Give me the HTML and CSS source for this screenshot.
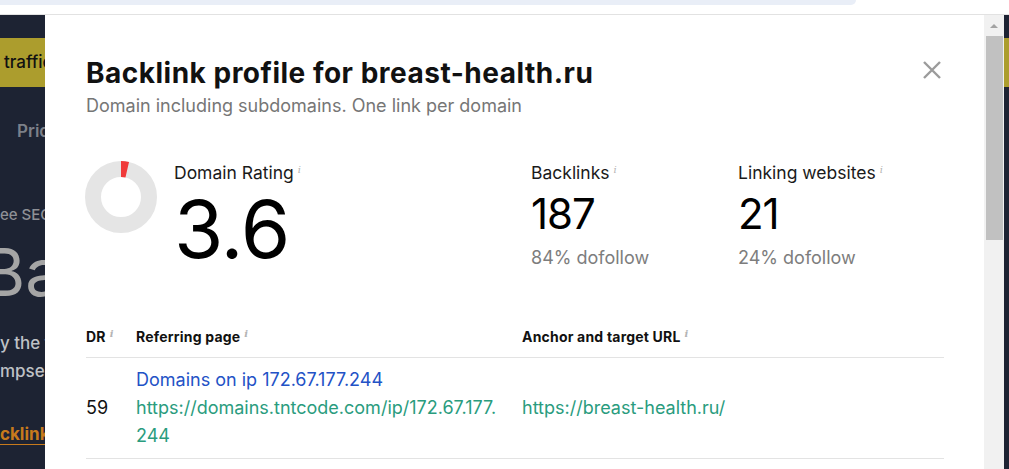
FILE: index.html
```html
<!DOCTYPE html>
<html lang="en">
<head>
    <meta charset="UTF-8">
    <meta name="viewport" content="width=device-width, initial-scale=1.0">
    <title>Backlink profile for breast-health.ru</title>
    <link rel="stylesheet" href="styles.css">
</head>
<body>
    <div class="chrome"><div class="chrome-tab"></div></div>
    <div class="stage">
        <div class="page-left">
            <div class="cta">traffic</div>
            <div class="nav-item">Pricing</div>
            <div class="eyebrow">ee SEO</div>
            <div class="hero">Ba</div>
            <div class="lead lead-first">y the f</div>
            <div class="lead">mpse</div>
            <div class="more">cklinks</div>
        </div>

        <div class="modal">
            <div class="modal-head">
                <div>
                    <h1 class="modal-title">Backlink profile for breast-health.ru</h1>
                    <p class="modal-subtitle">Domain including subdomains. One link per domain</p>
                </div>
                <button class="close-btn" aria-label="Close">
                    <svg width="22" height="22" viewBox="0 0 22 22">
                        <path d="M3 3 L19 19 M19 3 L3 19" stroke="#9b9b9b" stroke-width="2.4" fill="none"/>
                    </svg>
                </button>
            </div>

            <div class="metrics">
                <div class="metric metric-dr">
                    <svg class="donut" width="72" height="72" viewBox="0 0 72 72">
                        <circle cx="36" cy="36" r="28" fill="none" stroke="#e5e5e5" stroke-width="16"/>
                        <circle cx="36" cy="36" r="28" fill="none" stroke="#f03a3a" stroke-width="16"
                                stroke-dasharray="6.3 175.9" transform="rotate(-90 36 36)"/>
                    </svg>
                    <div>
                        <div class="metric-label">Domain Rating<span class="info">i</span></div>
                        <div class="dr-value">3.6</div>
                    </div>
                </div>
                <div class="metric">
                    <div class="metric-label">Backlinks<span class="info">i</span></div>
                    <div class="metric-value">187</div>
                    <div class="metric-sub">84% dofollow</div>
                </div>
                <div class="metric">
                    <div class="metric-label">Linking websites<span class="info">i</span></div>
                    <div class="metric-value">21</div>
                    <div class="metric-sub">24% dofollow</div>
                </div>
            </div>

            <table class="links">
                <thead>
                    <tr>
                        <th class="col-dr">DR<span class="info">i</span></th>
                        <th class="col-page">Referring page<span class="info">i</span></th>
                        <th>Anchor and target URL<span class="info">i</span></th>
                    </tr>
                </thead>
                <tbody>
                    <tr>
                        <td>59</td>
                        <td>
                            <a class="page-title" href="#">Domains on ip 172.67.177.244</a>
                            <a class="url" href="#">https://domains.tntcode.com/ip/172.67.177.<br>244</a>
                        </td>
                        <td><a class="url" href="#">https://breast-health.ru/</a></td>
                    </tr>
                </tbody>
            </table>
        </div>

        <div class="scrollbar">
            <div class="scroll-arrow"></div>
            <div class="scroll-thumb"></div>
        </div>
        <div class="page-right"><div class="cta-edge"></div></div>
    </div>
</body>
</html>
```

FILE: styles.css
```css
body {
    margin: 0;
    width: 1009px;
    height: 469px;
    overflow: hidden;
    font-family: Inter, "Noto Sans", sans-serif;
    color: #111;
    background: #fff;
}
.chrome {
    height: 14px;
    border-bottom: 1px solid #e2e2e2;
    background: #fff;
}
.chrome-tab {
    width: 856px;
    height: 5px;
    background: #e9eef7;
    border-bottom-right-radius: 6px;
}
.stage {
    display: flex;
    height: 454px;
}

/* dimmed page behind the dialog */
.page-left {
    width: 45px;
    flex-shrink: 0;
    overflow: hidden;
    background: #1d2333;
    white-space: nowrap;
}
.cta {
    margin-top: 23px;
    width: 120px;
    height: 49px;
    line-height: 49px;
    padding-left: 4px;
    background: #ac9d2d;
    color: #111;
    font-size: 17px;
    font-weight: 500;
}
.nav-item {
    margin-top: 33px;
    padding-left: 17px;
    font-size: 17px;
    line-height: 22px;
    font-weight: 600;
    color: #7c8089;
}
.eyebrow {
    margin-top: 62px;
    font-size: 15px;
    line-height: 22px;
    font-weight: 500;
    color: #8e9096;
}
.hero {
    margin-top: 13px;
    margin-left: -18px;
    font-size: 66px;
    line-height: 66px;
    color: #a5a5a5;
}
.lead {
    font-size: 17px;
    line-height: 28px;
    font-weight: 500;
    color: #bfc1c5;
}
.lead-first {
    margin-top: 24px;
}
.more {
    margin-top: 38px;
    font-size: 17px;
    line-height: 22px;
    font-weight: 700;
    color: #c77a1c;
    text-decoration: underline;
    text-underline-offset: 4px;
}
.page-right {
    width: 5px;
    flex-shrink: 0;
    background: #1d2333;
}
.cta-edge {
    margin-top: 23px;
    height: 49px;
    background: #ac9d2d;
}

/* dialog */
.modal {
    width: 939px;
    flex-shrink: 0;
    box-sizing: border-box;
    padding: 41px 41px 0 41px;
    background: #fff;
}
.modal-head {
    display: flex;
    justify-content: space-between;
    align-items: flex-start;
}
.modal-title {
    margin: 0;
    font-size: 28px;
    line-height: 34px;
    font-weight: 700;
    letter-spacing: 0.5px;
    color: #111;
}
.modal-subtitle {
    margin: 5px 0 0;
    font-size: 18px;
    line-height: 22px;
    color: #767676;
}
.close-btn {
    width: 22px;
    height: 22px;
    margin-top: 3px;
    padding: 0;
    border: none;
    background: none;
}
.close-btn svg {
    display: block;
}

.metrics {
    display: grid;
    grid-template-columns: 445px 207px 1fr;
    margin-top: 45px;
}
.metric-dr {
    display: flex;
    align-items: flex-start;
    gap: 17px;
}
.donut {
    display: block;
    margin-top: -1px;
    margin-left: -1px;
}
.metric-label {
    font-size: 17.5px;
    line-height: 22px;
    color: #1a1a1a;
}
.info {
    margin-left: 4px;
    font-family: "DejaVu Serif", serif;
    font-style: italic;
    font-size: 10px;
    line-height: 0;
    color: #b4b4b4;
    vertical-align: 6px;
}
.dr-value {
    margin-top: 5px;
    font-size: 80px;
    line-height: 80px;
    letter-spacing: -1px;
    color: #000;
}
.metric-value {
    margin-top: 6px;
    font-size: 42px;
    line-height: 48px;
    letter-spacing: -1px;
    color: #000;
}
.metric-sub {
    margin-top: 9px;
    font-size: 18px;
    line-height: 22px;
    color: #7d7d7d;
}

.links {
    width: 858px;
    margin-top: 59px;
    border-collapse: collapse;
}
.links th {
    padding: 0 0 11px;
    border-bottom: 1px solid #e3e3e3;
    text-align: left;
    font-size: 14px;
    line-height: 18px;
    font-weight: 700;
    letter-spacing: 0.2px;
    color: #111;
}
.links th .info {
    vertical-align: 5px;
}
.col-dr {
    width: 50px;
}
.col-page {
    width: 386px;
}
.links td {
    padding: 8px 0 8px;
    border-bottom: 1px solid #e3e3e3;
    font-size: 18px;
    line-height: 28px;
    color: #111;
    vertical-align: middle;
}
.links a {
    display: block;
    text-decoration: none;
}
.page-title {
    color: #2352c6;
}
.url {
    color: #2a9c7e;
}

.scrollbar {
    width: 20px;
    flex-shrink: 0;
    box-sizing: border-box;
    padding: 9px 0 0 2px;
    background: #f1f1f1;
}
.scroll-arrow {
    width: 0;
    height: 0;
    margin-left: 4px;
    border-left: 4px solid transparent;
    border-right: 4px solid transparent;
    border-bottom: 4px solid #a3a3a3;
}
.scroll-thumb {
    margin-top: 8px;
    width: 17px;
    height: 204px;
    background: #c1c1c1;
}
```
